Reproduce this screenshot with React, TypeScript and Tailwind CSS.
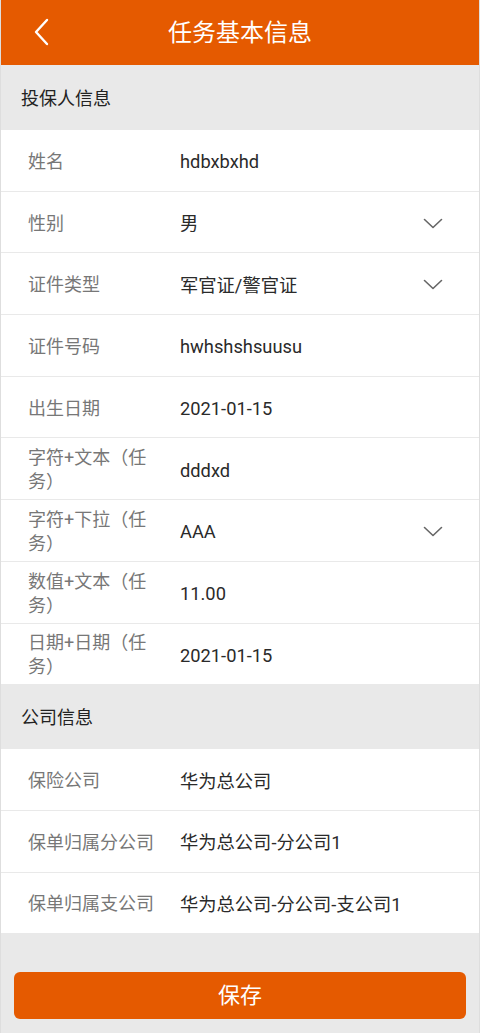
import React from 'react';

type Row = { label: string; value: string; select?: boolean };

const personRows: Row[] = [
    { label: '姓名', value: 'hdbxbxhd' },
    { label: '性别', value: '男', select: true },
    { label: '证件类型', value: '军官证/警官证', select: true },
    { label: '证件号码', value: 'hwhshshsuusu' },
    { label: '出生日期', value: '2021-01-15' },
    { label: '字符+文本（任务）', value: 'dddxd' },
    { label: '字符+下拉（任务）', value: 'AAA', select: true },
    { label: '数值+文本（任务）', value: '11.00' },
    { label: '日期+日期（任务）', value: '2021-01-15' },
];

const companyRows: Row[] = [
    { label: '保险公司', value: '华为总公司' },
    { label: '保单归属分公司', value: '华为总公司-分公司1' },
    { label: '保单归属支公司', value: '华为总公司-分公司-支公司1' },
];

const Chevron = () => (
    <svg width="20" height="12" viewBox="0 0 20 12" fill="none">
        <path d="M1.5 1.5 L10 9.5 L18.5 1.5" stroke="#666" strokeWidth="1.6" strokeLinecap="round" strokeLinejoin="round" />
    </svg>
);

const FieldRow: React.FC<{ row: Row }> = ({ row }) => (
    <div className="h-[60.7px] bg-white flex items-center pl-[27px] pr-[36px] pt-[3px]">
        <div className="w-[134px] shrink-0 text-[18px] leading-[24px] text-[#777]">{row.label}</div>
        <div className="ml-[18px] flex-1 text-[18.3px] text-[#2a2a2a] leading-[24px] pt-[1px]">{row.value}</div>
        {row.select && <Chevron />}
    </div>
);

const Section: React.FC<{ title: string; rows: Row[] }> = ({ title, rows }) => (
    <div>
        <div className="h-[65px] flex items-center pl-[20px] pt-[2px] text-[18px] text-[#222]">{title}</div>
        <div className="flex flex-col gap-[1px]">
            {rows.map((r) => (
                <FieldRow key={r.label} row={r} />
            ))}
        </div>
    </div>
);

export default function App() {
    return (
        <div
            className="w-[480px] h-[1033px] bg-[#e9e9e9] flex flex-col border-x border-[#dedede]"
            style={{ fontFamily: 'Roboto, "Noto Sans CJK SC", sans-serif' }}
        >
            {/* Header */}
            <div className="h-[65px] bg-[#e55a00] relative flex items-center justify-center shrink-0">
                <svg className="absolute left-[32px] top-[18px]" width="16" height="28" viewBox="0 0 16 28" fill="none">
                    <path d="M14 2 L3 14 L14 26" stroke="#fff" strokeWidth="2.4" strokeLinecap="round" strokeLinejoin="round" />
                </svg>
                <span className="text-white text-[24px]">任务基本信息</span>
            </div>

            <Section title="投保人信息" rows={personRows} />
            <Section title="公司信息" rows={companyRows} />

            <div className="flex-1" />
            <div className="px-[13px] pb-[14px]">
                <button className="w-full h-[47px] rounded-[6px] bg-[#e55a00] text-white text-[22px]">保存</button>
            </div>
        </div>
    );
}
